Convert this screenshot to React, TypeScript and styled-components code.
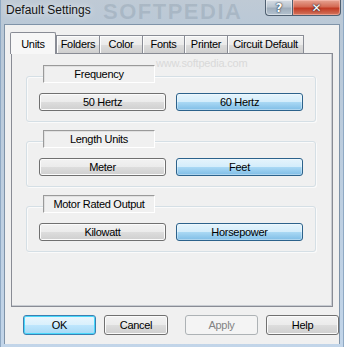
import React from "react";
import styled, { createGlobalStyle, css } from "styled-components";

const Global = createGlobalStyle`
  html, body { margin: 0; padding: 0; background: #c4d3e2; }
  body { font-family: "Liberation Sans", Arial, sans-serif; font-size: 11px; color: #000; }
  * { box-sizing: border-box; }
`;

const Window = styled.div`
  width: 344px;
  height: 347px;
  display: flex;
  flex-direction: column;
  padding: 0 3px 3px 3px;
  background: linear-gradient(to bottom, #bfcad5 0px, #b9c8d7 30px, #c2d5e9 100%);
  border-left: 1px solid #8fa9c4;
  border-right: 1px solid #8fa9c4;
  overflow: hidden;
`;

const TitleBar = styled.div`
  position: relative;
  height: 24px;
  flex: none;
  display: flex;
  align-items: flex-start;
  margin: 0 -3px 0 -1px;
  padding-left: 3px;
`;

const Title = styled.div`
  font-family: "Liberation Sans", Arial, sans-serif;
  font-size: 12px;
  line-height: 14px;
  padding-top: 3px;
  color: #141414;
  text-shadow: 0 0 6px rgba(255, 255, 255, 0.9);
  position: relative;
  z-index: 1;
`;

const TitleMark = styled.div`
  position: absolute;
  left: 100px;
  top: 1px;
  font-family: "Liberation Sans", Arial, sans-serif;
  font-weight: bold;
  font-size: 22px;
  line-height: 22px;
  letter-spacing: 1.5px;
  color: rgba(120, 138, 156, 0.28);
  pointer-events: none;
`;

const Caption = styled.div`
  margin-left: auto;
  margin-right: 2px;
  display: flex;
  position: relative;
  z-index: 1;
`;

const CapBtn = styled.div<{ $close?: boolean }>`
  height: 16px;
  width: ${(p) => (p.$close ? "49px" : "27px")};
  display: flex;
  align-items: center;
  justify-content: center;
  font-family: "DejaVu Sans", sans-serif;
  font-weight: bold;
  font-size: 12px;
  color: #fff;
  text-shadow: 0 0 2px #1a2a3a, 0 0 1px #1a2a3a;
  border: 1px solid #4f5f70;
  border-top: none;
  ${(p) =>
    p.$close
      ? css`
          border-radius: 0 0 4px 0;
          background: linear-gradient(to bottom, #e6a493 0%, #d46a54 45%, #c23a23 55%, #d3765e 100%);
          box-shadow: inset 0 0 0 1px rgba(255, 200, 190, 0.5);
        `
      : css`
          border-right: none;
          border-radius: 0 0 0 4px;
          background: linear-gradient(to bottom, #d6dde4 0%, #b9c4cf 45%, #9fadbb 55%, #b4c2cf 100%);
          box-shadow: inset 0 0 0 1px rgba(255, 255, 255, 0.45);
        `}
`;

const Client = styled.div`
  flex: 1;
  display: flex;
  flex-direction: column;
  background: #f0f0f0;
  border: 1px solid #7f93a8;
  border-bottom: none;
  padding: 7px 6px 9px 6px;
`;

const TabStrip = styled.div`
  height: 21px;
  display: flex;
  align-items: flex-end;
  margin-left: -1px;
`;

const Tab = styled.div<{ $w: number; $active?: boolean; $last?: boolean }>`
  width: ${(p) => p.$w}px;
  text-align: center;
  white-space: nowrap;
  letter-spacing: -0.3px;
  border: 1px solid #898c95;
  border-bottom: none;
  ${(p) => (p.$last ? "" : "border-right: none;")}
  ${(p) =>
    p.$active
      ? css`
          height: 22px;
          margin-bottom: -1px;
          padding-top: 5px;
          background: #f7f7f7;
          border-right: 1px solid #898c95;
          position: relative;
          z-index: 2;
          border-radius: 2px 2px 0 0;
        `
      : css`
          height: 18px;
          padding-top: 2px;
          background: linear-gradient(to bottom, #f2f2f2 0%, #ebebeb 50%, #dddddd 51%, #cfcfcf 100%);
          box-shadow: inset 1px 1px 0 #fcfcfc;
        `}
`;

const Pane = styled.div`
  position: relative;
  flex: 1;
  background: #f0f0f0;
  border: 1px solid #898c95;
  box-shadow: inset -1px -1px 0 #c8ccd2;
  padding: 11px 16px 0 14px;
  display: flex;
  flex-direction: column;
  gap: 8px;
`;

const SiteMark = styled.div`
  position: absolute;
  left: 144px;
  top: 3px;
  font-size: 11px;
  letter-spacing: -0.2px;
  color: #d9d9d9;
  pointer-events: none;
`;

const Group = styled.div`
  display: flex;
  flex-direction: column;
`;

const GroupLabel = styled.div`
  position: relative;
  z-index: 1;
  margin-left: 17px;
  width: 112px;
  height: 18px;
  line-height: 16px;
  text-align: center;
  letter-spacing: -0.3px;
  white-space: nowrap;
  background: #f0f0f0;
  border: 1px solid;
  border-color: #9a9a9a #ffffff #ffffff #9a9a9a;
  box-shadow: inset 1px 1px 0 #e0e0e0;
`;

const Frame = styled.div`
  margin-top: -7px;
  border: 1px solid #d5dfe5;
  border-radius: 3px;
  box-shadow: inset 1px 1px 0 #fafafa, 1px 1px 0 #fafafa;
  padding: 16px 15px 10px 12px;
  display: grid;
  grid-template-columns: 127px 127px;
  gap: 10px;
`;

const buttonBase = css`
  height: 18px;
  display: flex;
  align-items: center;
  justify-content: center;
  letter-spacing: -0.3px;
  border-radius: 3px;
  font-size: 11px;
`;

const OptionBtn = styled.div<{ $on?: boolean }>`
  ${buttonBase}
  ${(p) =>
    p.$on
      ? css`
          border: 1px solid #2c628b;
          background: linear-gradient(to bottom, #e5f4fc 0%, #d4edfb 48%, #a9d8f4 52%, #7fbde6 100%);
          box-shadow: inset 0 0 0 1px rgba(255, 255, 255, 0.35);
        `
      : css`
          border: 1px solid #707070;
          background: linear-gradient(to bottom, #f2f2f2 0%, #ebebeb 50%, #dddddd 51%, #cfcfcf 100%);
          box-shadow: inset 0 0 0 1px #fbfbfb;
        `}
`;

const ButtonRow = styled.div`
  margin-top: 8px;
  padding-left: 12px;
  display: grid;
  grid-template-columns: repeat(4, 73px);
  gap: 8px;
`;

const DlgBtn = styled.div<{ $kind?: "default" | "disabled" | "normal"; $w?: number }>`
  ${buttonBase}
  height: 20px;
  width: ${(p) => (p.$w ? `${p.$w}px` : "100%")};
  ${(p) =>
    p.$kind === "default"
      ? css`
          border: 1px solid #3c7fb1;
          background: linear-gradient(to bottom, #eaf6fd 0%, #d9f0fc 50%, #bee6fd 51%, #a7d9f5 100%);
          box-shadow: inset 0 0 0 1px #48d8fb;
        `
      : p.$kind === "disabled"
      ? css`
          border: 1px solid #adb2b5;
          background: #f4f4f4;
          color: #838383;
        `
      : css`
          border: 1px solid #707070;
          background: linear-gradient(to bottom, #f2f2f2 0%, #ebebeb 50%, #dddddd 51%, #cfcfcf 100%);
          box-shadow: inset 0 0 0 1px #fbfbfb;
        `}
`;

const tabs = [
  { label: "Units", w: 46, active: true },
  { label: "Folders", w: 43 },
  { label: "Color", w: 43 },
  { label: "Fonts", w: 42 },
  { label: "Printer", w: 43 },
  { label: "Circuit Default", w: 77 },
];

const groups = [
  { title: "Frequency", options: ["50 Hertz", "60 Hertz"] },
  { title: "Length Units", options: ["Meter", "Feet"] },
  { title: "Motor Rated Output", options: ["Kilowatt", "Horsepower"] },
];

export default function App() {
  return (
    <>
      <Global />
      <Window>
        <TitleBar>
          <Title>Default Settings</Title>
          <TitleMark>SOFTPEDIA</TitleMark>
          <Caption>
            <CapBtn>?</CapBtn>
            <CapBtn $close>✕</CapBtn>
          </Caption>
        </TitleBar>
        <Client>
          <TabStrip>
            {tabs.map((t, i) => (
              <Tab key={t.label} $w={t.w} $active={t.active} $last={i === tabs.length - 1}>
                {t.label}
              </Tab>
            ))}
          </TabStrip>
          <Pane>
            <SiteMark>www.softpedia.com</SiteMark>
            {groups.map((g) => (
              <Group key={g.title}>
                <GroupLabel>{g.title}</GroupLabel>
                <Frame>
                  <OptionBtn>{g.options[0]}</OptionBtn>
                  <OptionBtn $on>{g.options[1]}</OptionBtn>
                </Frame>
              </Group>
            ))}
          </Pane>
          <ButtonRow>
            <DlgBtn $kind="default">OK</DlgBtn>
            <DlgBtn $w={64}>Cancel</DlgBtn>
            <DlgBtn $kind="disabled">Apply</DlgBtn>
            <DlgBtn>Help</DlgBtn>
          </ButtonRow>
        </Client>
      </Window>
    </>
  );
}
